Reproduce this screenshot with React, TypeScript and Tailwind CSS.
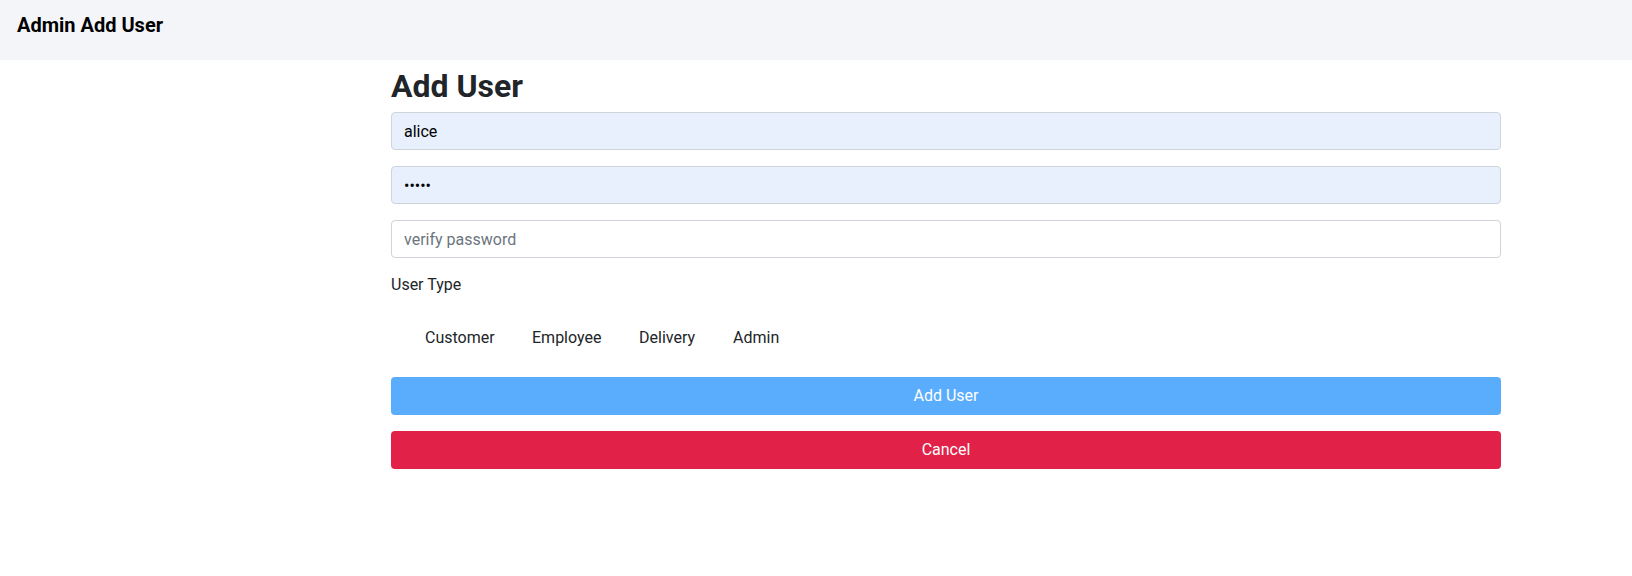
import { useState } from 'react';

const USER_TYPES = [
  { label: 'Customer', width: 'w-[107px]' },
  { label: 'Employee', width: 'w-[107px]' },
  { label: 'Delivery', width: 'w-[94px]' },
  { label: 'Admin', width: 'w-auto' },
];

export default function App() {
  const [username, setUsername] = useState('alice');
  const [password, setPassword] = useState('alice');
  const [verify, setVerify] = useState('');
  const [userType, setUserType] = useState('');

  return (
    <div className="min-h-screen bg-white font-['Roboto',sans-serif] text-[#212529]">
      <header className="h-[60px] bg-[#f4f5f9] pl-[17px] pt-[13px]">
        <h1 className="text-[20px] font-bold leading-[24px] text-black">Admin Add User</h1>
      </header>

      <div className="ml-[391px] w-[1110px]">
        <h2 className="mt-[7px] text-[32px] font-bold leading-[38px]">Add User</h2>

        <form className="mt-[7px] flex flex-col" onSubmit={(e) => e.preventDefault()}>
          <input
            type="text"
            value={username}
            onChange={(e) => setUsername(e.target.value)}
            placeholder="username"
            className="h-[38px] rounded-[4px] border border-[#ced4da] bg-[#e8f0fe] px-3 text-[16px] text-black outline-none"
          />
          <input
            type="password"
            value={password}
            onChange={(e) => setPassword(e.target.value)}
            placeholder="password"
            className="mt-4 h-[38px] rounded-[4px] border border-[#ced4da] bg-[#e8f0fe] px-3 text-[16px] text-black outline-none"
          />
          <input
            type="password"
            value={verify}
            onChange={(e) => setVerify(e.target.value)}
            placeholder="verify password"
            className="mt-4 h-[38px] rounded-[4px] border border-[#ced4da] bg-white px-3 text-[16px] text-black outline-none placeholder:text-[#6c757d]"
          />

          <label className="mt-[15px] text-[16px] leading-[24px] text-[#212529]">User Type</label>

          <div className="mt-[29px] flex pl-[34px] text-[16px] leading-[24px]">
            {USER_TYPES.map((t) => (
              <label key={t.label} className={`${t.width} cursor-pointer`}>
                <input
                  type="radio"
                  name="userType"
                  value={t.label}
                  checked={userType === t.label}
                  onChange={() => setUserType(t.label)}
                  className="hidden"
                />
                {t.label}
              </label>
            ))}
          </div>

          <button
            type="submit"
            className="mt-[27px] h-[38px] rounded-[4px] bg-[#5aadfc] text-[16px] text-white"
          >
            Add User
          </button>
          <button
            type="button"
            className="mt-4 h-[38px] rounded-[4px] bg-[#e22148] text-[16px] text-white"
          >
            Cancel
          </button>
        </form>
      </div>
    </div>
  );
}
